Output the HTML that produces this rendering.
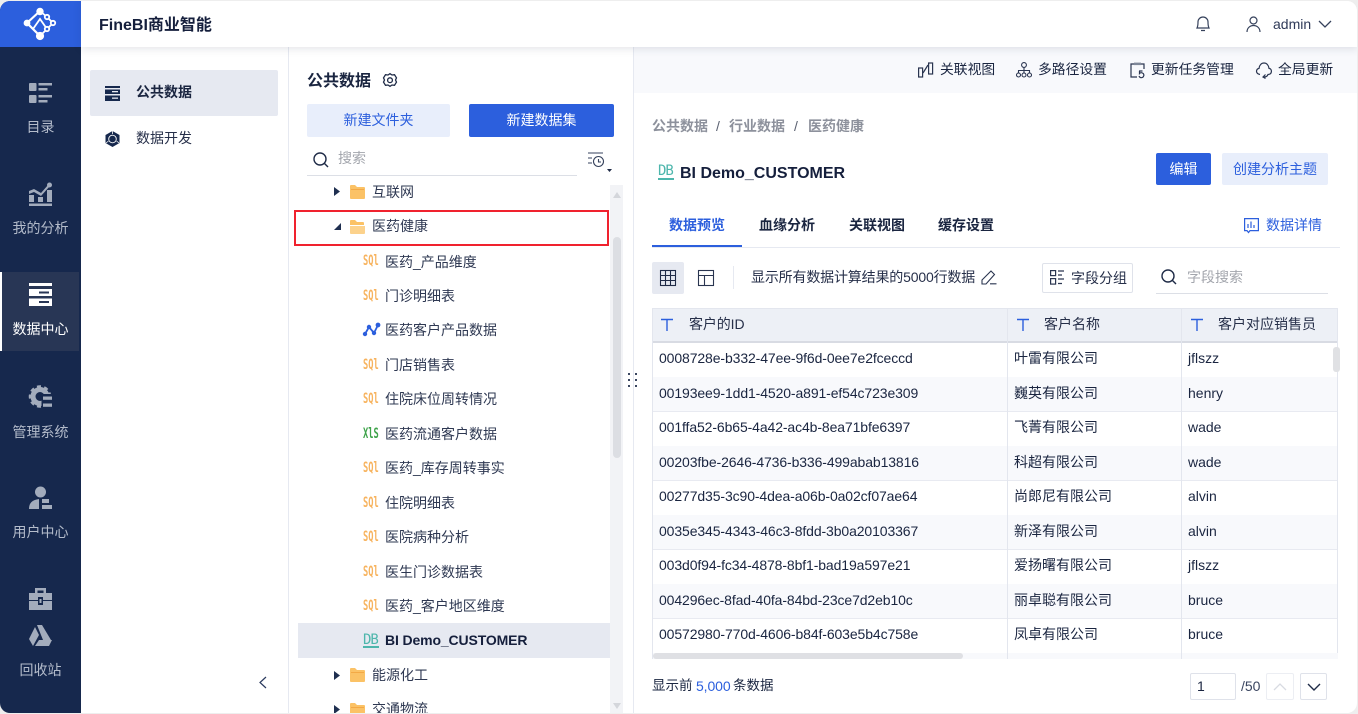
<!DOCTYPE html>
<html lang="zh"><head><meta charset="utf-8"><title>FineBI</title>
<style>
*{box-sizing:border-box}
html,body{margin:0;padding:0;width:1358px;height:714px;overflow:hidden;background:#eeeeee}
body{font-family:"Liberation Sans","Noto Sans CJK SC",sans-serif;font-size:14px;color:#1a2540}
#app{position:absolute;left:0;top:1px;width:1357px;height:712px;background:#fff;border-radius:10px;overflow:hidden}
.a{position:absolute}
.t{position:absolute;white-space:nowrap;line-height:20px;height:20px}
.id{letter-spacing:-.11px}
svg{position:absolute;overflow:visible}
.side{color:#b4bccb;width:81px;left:0;text-align:center}
.b{font-weight:700}
.sq,.xl{position:absolute;font:700 14px/14px "DejaVu Sans Mono",monospace;transform:scaleX(.62);transform-origin:0 0;white-space:nowrap;left:363px}
.sq{color:#f7b35e}
.xl{color:#3ea34a}
.db{position:absolute;font:400 14px/14px "DejaVu Sans Mono",monospace;color:#4db6ac;border-bottom:2px solid #4db6ac;height:15px;letter-spacing:-1px;width:16px;white-space:nowrap}
.bl{color:#2c5fdd}
.btn{position:absolute;text-align:center;border-radius:2px;line-height:32px}
.r{position:absolute;left:652px;width:686px;height:35px;border-bottom:1px solid #e8eaf1}
.r.z{background:#f8f9fc}
.v{position:absolute;width:1px;background:#e3e6ee;top:308px;height:351px}
.tb{font-size:13.8px}
</style></head><body>
<div id="app">
<div style="position:absolute;left:0;top:-1px;width:1358px;height:714px">

<!-- sidebar -->
<div class="a" style="left:0;top:0;width:81px;height:714px;background:#16284d"></div>
<div class="a" style="left:0;top:0;width:81px;height:47px;background:#2c5fdd"></div>
<svg style="left:24px;top:8px" width="33" height="32" viewBox="0 0 33 32" fill="none" stroke="#fff" stroke-width="1.800"><path d="M16 3L3 15l13 13" stroke-width="2.200"/><path d="M16 3l7 6 6 6-6 6-7 7M9 21l7-10 7 10"/><circle cx="16" cy="3.500" r="2.800" fill="#fff"/><circle cx="3" cy="15" r="2.500" fill="#fff"/><circle cx="16" cy="28" r="3.200" fill="#fff"/><circle cx="23" cy="9" r="2.200" fill="#2c5fdd"/><circle cx="29" cy="15" r="2.200" fill="#2c5fdd"/><circle cx="23" cy="21" r="2.200" fill="#2c5fdd"/></svg>
<div class="a" style="left:2px;top:272px;width:77px;height:79px;background:#283655"></div>
<div class="a" style="left:0;top:272px;width:2px;height:79px;background:#fff"></div>

<svg style="left:29px;top:82px" width="23" height="22" fill="#a3acbc"><rect width="7.500" height="8" y="1" rx="1"/><rect y="13" width="7.500" height="8" rx="1"/><rect x="9.500" y="1" width="13.500" height="2.500"/><rect x="9.500" y="6" width="9" height="2.500"/><rect x="9.500" y="13" width="13.500" height="2.500"/><rect x="9.500" y="18" width="9" height="2.500"/></svg>
<div class="t side" style="top:117px">目录</div>
<svg style="left:29px;top:182px" width="23" height="24" fill="#a3acbc"><path d="M0 9l5-2 7 4 7-8 1.500 1.500L12 14 5 10l-5 2z"/><circle cx="20.500" cy="3" r="2.500"/><rect y="13" width="5" height="7"/><rect x="9" y="15" width="5" height="5"/><rect x="18" y="8" width="5" height="12"/><rect y="21.500" width="23" height="2.500"/></svg>
<div class="t side" style="top:218px">我的分析</div>
<svg style="left:29px;top:283px" width="23" height="23" fill="#fff"><rect width="23" height="3"/><rect y="6" width="23" height="7"/><rect y="15.500" width="23" height="7.500"/><rect x="10" y="8.500" width="10" height="2" fill="#283655"/><rect x="10" y="18" width="10" height="2" fill="#283655"/></svg>
<div class="t side" style="top:319px;color:#fff">数据中心</div>
<svg style="left:29px;top:385px" width="23" height="23" fill="none"><circle cx="11" cy="11.500" r="7" stroke="#a3acbc" stroke-width="5"/><circle cx="11" cy="11.500" r="10" stroke="#a3acbc" stroke-width="2.500" stroke-dasharray="4 3.300"/><rect x="12.500" y="9" width="11" height="15" fill="#16284d"/><rect x="14" y="11.500" width="9" height="3.300" fill="#a3acbc"/><rect x="14" y="18.500" width="9" height="3.300" fill="#a3acbc"/></svg>
<div class="t side" style="top:422px">管理系统</div>
<svg style="left:29px;top:486px" width="23" height="24" fill="#a3acbc"><circle cx="11.500" cy="6" r="5.500"/><path d="M0 23c0-6 3-9 10-10v10z"/><rect x="13" y="13" width="7" height="4"/><rect x="13" y="19" width="10" height="4"/></svg>
<div class="t side" style="top:522px">用户中心</div>
<svg style="left:29px;top:588px" width="23" height="22" fill="#a3acbc"><path d="M6 0h11v5h-2.500V2.500h-6V5H6z"/><rect y="5" width="23" height="7"/><rect y="13" width="23" height="9"/><rect x="9" y="9" width="5" height="8" fill="#16284d"/><rect x="10.500" y="11" width="2" height="4" fill="#a3acbc"/></svg>
<svg style="left:29px;top:625px" width="23" height="22" fill="#a3acbc"><path d="M8 0h5l9 15H14z"/><path d="M6 2l4 8-6 11-4-7z"/><path d="M10 15h13l-3 6H6z"/></svg>
<div class="t side" style="top:660px">回收站</div>

<!-- topbar -->
<div class="a" style="left:81px;top:0;width:1277px;height:47px;background:#fff;box-shadow:0 2px 8px rgba(30,40,70,.12);z-index:3"></div>
<div class="t b" style="left:99px;top:16px;font-size:16px;z-index:4;color:#151f3c">FineBI商业智能</div>
<svg style="left:1195px;top:15px;z-index:4" width="16" height="17" fill="none" stroke="#36425c" stroke-width="1.200"><path d="M2 13c1-2 1-3 1-6a5 5 0 0 1 10 0c0 3 0 4 1 6zM6 15.500h4"/></svg>
<svg style="left:1246px;top:16px;z-index:4" width="15" height="16" fill="none" stroke="#36425c" stroke-width="1.200"><circle cx="7.500" cy="4.500" r="3.500"/><path d="M1 16c0-4 3-6.500 6.500-6.500S14 12 14 16"/></svg>
<div class="t" style="left:1273px;top:14px;color:#2f3a58;z-index:4">admin</div>
<svg style="left:1318px;top:20px;z-index:4" width="14" height="9" fill="none" stroke="#36425c" stroke-width="1.300"><path d="M1 1l6 6 6-6"/></svg>

<!-- left nav -->
<div class="a" style="left:288px;top:47px;width:1px;height:667px;background:#e6e9f1"></div>
<div class="a" style="left:90px;top:70px;width:188px;height:46px;background:#e6e9f1;border-radius:2px"></div>
<svg style="left:105px;top:86px" width="15" height="15" fill="#16284d"><rect width="15" height="2"/><rect y="3.500" width="15" height="4.500"/><rect y="9.500" width="15" height="5.500"/><rect x="7" y="5" width="6" height="1.300" fill="#e6e9f1"/><rect x="7" y="11.500" width="6" height="1.300" fill="#e6e9f1"/></svg>
<div class="t b" style="left:136px;top:82px">公共数据</div>
<svg style="left:105px;top:131px" width="15" height="16" fill="#16284d"><path d="M7.500 0l7 4v8l-7 4-7-4V4z"/><circle cx="7.500" cy="8" r="3.800" fill="none" stroke="#fff" stroke-width=".9"/><path d="M7.500 0v3M1 12l2.500-2M14 12l-2.500-2" stroke="#fff" stroke-width=".8"/></svg>
<div class="t" style="left:136px;top:128px;color:#262f49">数据开发</div>
<svg style="left:258px;top:676px" width="9" height="13" fill="none" stroke="#2a3a5e" stroke-width="1.200"><path d="M8 1L2 6.500 8 12"/></svg>

<!-- tree panel -->
<div class="a" style="left:633px;top:47px;width:1px;height:667px;background:#e6e9f1"></div>
<div class="t b" style="left:307px;top:72px;font-size:16px">公共数据</div>
<svg style="left:382px;top:73px" width="16" height="16" viewBox="0 0 16 16" fill="none" stroke="#1f2b47" stroke-width="1.300"><path d="M8 .7l2 1.300 2.500-.3 2 3.200-1 2.100 1 2.100-2 3.200-2.500-.3-2 1.300-2-1.300-2.500.3-2-3.200 1-2.100-1-2.100 2-3.200 2.500.3z"/><circle cx="8" cy="7.200" r="2.400"/></svg>
<div class="btn bl" style="left:307px;top:104px;width:143px;height:33px;background:#e8eefb">新建文件夹</div>
<div class="btn" style="left:469px;top:104px;width:145px;height:33px;background:#2c5fdd;color:#fff">新建数据集</div>
<svg style="left:313px;top:152px" width="16" height="16" fill="none" stroke="#1f2b47" stroke-width="1.400"><circle cx="7" cy="7" r="6"/><path d="M11.500 11.500L15 15"/></svg>
<div class="t" style="left:338px;top:148px;color:#a3a6ad">搜索</div>
<div class="a" style="left:307px;top:175px;width:270px;height:1px;background:#dcdfe6"></div>
<svg style="left:588px;top:152px" width="24" height="22" fill="none" stroke="#36425c" stroke-width="1.100"><path d="M0 1h15M0 6h4M0 11h4"/><circle cx="10.500" cy="9.500" r="5"/><path d="M10.500 7v3h2.500"/><path d="M19 17h5l-2.500 3z" fill="#1f2b47" stroke="none"/></svg>

<div class="a" style="left:610px;top:185px;width:13px;height:529px;background:#f2f3f6"></div>
<div class="a" style="left:613px;top:237px;width:8px;height:221px;background:#dcdee3;border-radius:4px"></div>
<svg style="left:613px;top:192px" width="8" height="6" fill="#d4d6db"><path d="M4 0l4 6H0z"></path></svg>
<svg style="left:613px;top:703px" width="8" height="6" fill="#d4d6db"><path d="M4 6l4-6H0z"></path></svg>

<svg style="left:334px;top:187px" width="7" height="9" fill="#1f2f50"><path d="M0 0l6 4.500L0 9z"/></svg>
<svg style="left:350px;top:185px" width="15" height="14"><path d="M0 1a1 1 0 0 1 1-1h4l2 2h7a1 1 0 0 1 1 1v10a1 1 0 0 1-1 1H1a1 1 0 0 1-1-1z" fill="#fbc266"/><rect x="1" y="4" width="13" height="1" fill="#f3a946"/></svg>
<div class="t" style="left:372px;top:182px;color:#2e3852">互联网</div>

<div class="a" style="left:294px;top:210px;width:315px;height:36px;border:2px solid #f0222e"></div>
<svg style="left:334px;top:223px" width="7" height="7" fill="#1f2f50"><path d="M7 0v7H0z"/></svg>
<svg style="left:350px;top:220px" width="15" height="14"><path d="M0 1a1 1 0 0 1 1-1h4l2 2h6a1 1 0 0 1 1 1v2H0z" fill="#fbc266"/><path d="M0 6h15v7a1 1 0 0 1-1 1H1a1 1 0 0 1-1-1z" fill="#fcd28c"/></svg>
<div class="t" style="left:372px;top:216px;color:#2e3852">医药健康</div>

<span class="sq" style="top:254px">SQl</span><div class="t" style="left:385px;top:252px;color:#2e3852">医药_产品维度</div>
<span class="sq" style="top:289px">SQl</span><div class="t" style="left:385px;top:286px;color:#2e3852">门诊明细表</div>
<svg style="left:363px;top:323px" width="17" height="13" fill="none" stroke="#2c5fdd" stroke-width="1.800"><path d="M2 11L6 4l5 6 4-8"/><circle cx="2" cy="11" r="1.300" fill="#2c5fdd"/><circle cx="6" cy="4" r="1.300" fill="#2c5fdd"/><circle cx="11" cy="10" r="1.300" fill="#2c5fdd"/><circle cx="15" cy="2" r="1.500" fill="#2c5fdd"/></svg>
<div class="t" style="left:385px;top:320px;color:#2e3852">医药客户产品数据</div>
<span class="sq" style="top:358px">SQl</span><div class="t" style="left:385px;top:355px;color:#2e3852">门店销售表</div>
<span class="sq" style="top:392px">SQl</span><div class="t" style="left:385px;top:389px;color:#2e3852">住院床位周转情况</div>
<span class="xl" style="top:427px">XlS</span><div class="t" style="left:385px;top:424px;color:#2e3852">医药流通客户数据</div>
<span class="sq" style="top:461px">SQl</span><div class="t" style="left:385px;top:458px;color:#2e3852">医药_库存周转事实</div>
<span class="sq" style="top:496px">SQl</span><div class="t" style="left:385px;top:493px;color:#2e3852">住院明细表</div>
<span class="sq" style="top:530px">SQl</span><div class="t" style="left:385px;top:527px;color:#2e3852">医院病种分析</div>
<span class="sq" style="top:565px">SQl</span><div class="t" style="left:385px;top:562px;color:#2e3852">医生门诊数据表</div>
<span class="sq" style="top:599px">SQl</span><div class="t" style="left:385px;top:596px;color:#2e3852">医药_客户地区维度</div>
<div class="a" style="left:298px;top:623px;width:312px;height:35px;background:#e6e9f1"></div>
<span class="db" style="left:363px;top:633px">DB</span><div class="t b" style="left:385px;top:630px;color:#151f3c;letter-spacing:-.13px">BI Demo_CUSTOMER</div>
<svg style="left:334px;top:671px" width="7" height="9" fill="#1f2f50"><path d="M0 0l6 4.500L0 9z"/></svg>
<svg style="left:350px;top:668px" width="15" height="14"><path d="M0 1a1 1 0 0 1 1-1h4l2 2h7a1 1 0 0 1 1 1v10a1 1 0 0 1-1 1H1a1 1 0 0 1-1-1z" fill="#fbc266"/><rect x="1" y="4" width="13" height="1" fill="#f3a946"/></svg>
<div class="t" style="left:372px;top:665px;color:#2e3852">能源化工</div>
<svg style="left:334px;top:705px" width="7" height="9" fill="#1f2f50"><path d="M0 0l6 4.500L0 9z"/></svg>
<svg style="left:350px;top:703px" width="15" height="14"><path d="M0 1a1 1 0 0 1 1-1h4l2 2h7a1 1 0 0 1 1 1v10a1 1 0 0 1-1 1H1a1 1 0 0 1-1-1z" fill="#fbc266"/><rect x="1" y="4" width="13" height="1" fill="#f3a946"/></svg>
<div class="t" style="left:372px;top:699px;color:#2e3852">交通物流</div>

<svg style="left:628px;top:373px" width="10" height="14" fill="#3a4660"><rect width="2" height="2"/><rect x="7" width="2" height="2"/><rect y="6" width="2" height="2"/><rect x="7" y="6" width="2" height="2"/><rect y="12" width="2" height="2"/><rect x="7" y="12" width="2" height="2"/></svg>

<!-- right toolbar -->
<div class="a" style="left:634px;top:47px;width:724px;height:46px;background:#f8f9fc"></div>
<svg style="left:918px;top:62px" width="16" height="16" fill="none" stroke="#2a3550" stroke-width="1.200"><rect x=".6" y="6" width="4" height="9"/><rect x="10.600" y="1" width="4" height="11"/><path d="M5 11l5-8"/></svg>
<div class="t tb" style="left:940px;top:59.500px">关联视图</div>
<svg style="left:1016px;top:62px" width="16" height="16" fill="none" stroke="#2a3550" stroke-width="1.100"><circle cx="8" cy="3" r="2.400"/><circle cx="2.500" cy="13" r="2"/><circle cx="8" cy="13" r="2"/><circle cx="13.500" cy="13" r="2"/><path d="M8 5.500V11M2.500 11V8.500h11V11"/></svg>
<div class="t tb" style="left:1038px;top:59.500px">多路径设置</div>
<svg style="left:1130px;top:62px" width="16" height="16" fill="none" stroke="#2a3550" stroke-width="1.200"><path d="M4 2H1v13h6M11 2h3v5"/><rect x="4" y="0.600" width="7" height="2.500" fill="#7f8899" stroke="none"/><path d="M9 9h3.500M9.500 9v2.500a2.500 2.500 0 1 1-.5 2.500"/></svg>
<div class="t tb" style="left:1151px;top:59.500px">更新任务管理</div>
<svg style="left:1256px;top:62px" width="16" height="16" fill="none" stroke="#2a3550" stroke-width="1.200"><path d="M4 12.500C1 12 0 10 .8 8c.5-1 1.200-1.500 2.200-1.600C3.500 3 5.500 1 8 1s4.500 2 5 5.400c1.500.2 2.500 1.500 2.400 3-.1 1.800-1.400 3-3.400 3.100-.5 1.500-2 2.500-4 2.500"/><path d="M9.500 12.500L7 15l2.500 1.500"/></svg>
<div class="t tb" style="left:1278px;top:59.500px">全局更新</div>

<!-- content header -->
<div class="t b" style="left:652px;top:116px;color:#8d919c">公共数据</div>
<div class="t" style="left:716px;top:116px;color:#5a6070">/</div>
<div class="t b" style="left:729px;top:116px;color:#8d919c">行业数据</div>
<div class="t" style="left:794px;top:116px;color:#5a6070">/</div>
<div class="t b" style="left:808px;top:116px;color:#8d919c">医药健康</div>
<span class="db" style="left:658px;top:164px;height:16px">DB</span>
<div class="t b" style="left:680px;top:162px;font-size:16px;color:#151f3c;line-height:21px;height:21px;padding-top:1px">BI Demo_CUSTOMER</div>
<div class="btn" style="left:1156px;top:153px;width:55px;height:32px;background:#2c5fdd;color:#fff">编辑</div>
<div class="btn bl" style="left:1222px;top:153px;width:106px;height:32px;background:#e8eefb">创建分析主题</div>

<!-- tabs -->
<div class="a" style="left:652px;top:247px;width:688px;height:1px;background:#e6e9f1"></div>
<div class="a" style="left:652px;top:245px;width:90px;height:2px;background:#2c5fdd"></div>
<div class="t b bl" style="left:669px;top:215px">数据预览</div>
<div class="t b" style="left:759px;top:215px">血缘分析</div>
<div class="t b" style="left:849px;top:215px">关联视图</div>
<div class="t b" style="left:938px;top:215px">缓存设置</div>
<svg style="left:1244px;top:218px" width="15" height="15" fill="none" stroke="#2c5fdd" stroke-width="1.200"><path d="M.6.6h13.800v12H6L4.500 14.500 3 12.600H.6z"/><path d="M4 6v4M7 3.500V10M10 7v3"/></svg>
<div class="t bl" style="left:1266px;top:215px">数据详情</div>

<!-- tools -->
<div class="a" style="left:652px;top:262px;width:32px;height:32px;background:#e6e9f1;border-radius:2px"></div>
<svg style="left:660px;top:270px" width="16" height="16" fill="none" stroke="#1f2b47" stroke-width="1.100"><rect x=".5" y=".5" width="15" height="15"/><path d="M5.500 0v16M10.500 0v16M0 5.500h16M0 10.500h16"/></svg>
<svg style="left:698px;top:270px" width="16" height="16" fill="none" stroke="#2a3550" stroke-width="1.100"><rect x=".5" y=".5" width="15" height="15"/><path d="M0 5.500h16M6.500 5.500V16"/></svg>
<div class="a" style="left:733px;top:266px;width:1px;height:23px;background:#e6e9f1"></div>
<div class="t" style="left:751px;top:267px;color:#262f49;letter-spacing:-.17px">显示所有数据计算结果的5000行数据</div>
<svg style="left:981px;top:269px" width="16" height="16" fill="none" stroke="#2a3550" stroke-width="1.100"><path d="M1 11L10 2l3.500 3.500-8.500 9.500H1zM9 14.800h6.500"/></svg>
<div class="a" style="left:1042px;top:263px;width:91px;height:30px;border:1px solid #dfe2ea;border-radius:2px"></div>
<svg style="left:1050px;top:270px" width="15" height="15" fill="none" stroke="#2a3550" stroke-width="1.200"><rect x=".6" y=".6" width="5" height="5"/><rect x=".6" y="8.600" width="5" height="5.500"/><path d="M8 1h6M8 5h4M8 9h6M8 13.500h4"/></svg>
<div class="t" style="left:1071px;top:268px;color:#262f49">字段分组</div>
<svg style="left:1161px;top:269px" width="16" height="16" fill="none" stroke="#1f2b47" stroke-width="1.400"><circle cx="7" cy="7" r="6"/><path d="M11.500 11.500L15 15"/></svg>
<div class="t" style="left:1187px;top:267px;color:#a3a6ad">字段搜索</div>
<div class="a" style="left:1156px;top:293px;width:172px;height:1px;background:#dcdfe6"></div>

<!-- table -->
<div class="a" style="left:652px;top:308px;width:686px;height:35px;background:#edf0f6;border-top:1px solid #e3e6ee;border-bottom:2px solid #d8dbe3"></div>
<div class="r" style="top:343px"></div>
<div class="r z" style="top:377px"></div>
<div class="r" style="top:412px"></div>
<div class="r z" style="top:446px"></div>
<div class="r" style="top:481px"></div>
<div class="r z" style="top:515px"></div>
<div class="r" style="top:550px"></div>
<div class="r z" style="top:584px"></div>
<div class="r" style="top:619px"></div>
<div class="v" style="left:652px"></div>
<div class="v" style="left:1007px"></div>
<div class="v" style="left:1181px"></div>
<div class="v" style="left:1337px"></div>

<svg style="left:660px;top:318px" width="14" height="14" fill="none" stroke="#2c5fdd" stroke-width="1.400"><path d="M1 1.500h12M7 1.500V13"/></svg>
<svg style="left:1016px;top:318px" width="14" height="14" fill="none" stroke="#2c5fdd" stroke-width="1.400"><path d="M1 1.500h12M7 1.500V13"/></svg>
<svg style="left:1190px;top:318px" width="14" height="14" fill="none" stroke="#2c5fdd" stroke-width="1.400"><path d="M1 1.500h12M7 1.500V13"/></svg>
<div class="t id" style="left:689px;top:314px;color:#262f49">客户的ID</div>
<div class="t" style="left:1044px;top:314px;color:#262f49">客户名称</div>
<div class="t" style="left:1218px;top:314px;color:#262f49">客户对应销售员</div>

<div class="t id" style="left:659px;top:348px">0008728e-b332-47ee-9f6d-0ee7e2fceccd</div><div class="t" style="left:1014px;top:348px">叶雷有限公司</div><div class="t" style="left:1188px;top:348px">jflszz</div>
<div class="t id" style="left:659px;top:383px">00193ee9-1dd1-4520-a891-ef54c723e309</div><div class="t" style="left:1014px;top:383px">巍英有限公司</div><div class="t" style="left:1188px;top:383px">henry</div>
<div class="t id" style="left:659px;top:417px">001ffa52-6b65-4a42-ac4b-8ea71bfe6397</div><div class="t" style="left:1014px;top:417px">飞菁有限公司</div><div class="t" style="left:1188px;top:417px">wade</div>
<div class="t id" style="left:659px;top:452px">00203fbe-2646-4736-b336-499abab13816</div><div class="t" style="left:1014px;top:452px">科超有限公司</div><div class="t" style="left:1188px;top:452px">wade</div>
<div class="t id" style="left:659px;top:486px">00277d35-3c90-4dea-a06b-0a02cf07ae64</div><div class="t" style="left:1014px;top:486px">尚郎尼有限公司</div><div class="t" style="left:1188px;top:486px">alvin</div>
<div class="t id" style="left:659px;top:521px">0035e345-4343-46c3-8fdd-3b0a20103367</div><div class="t" style="left:1014px;top:521px">新泽有限公司</div><div class="t" style="left:1188px;top:521px">alvin</div>
<div class="t id" style="left:659px;top:555px">003d0f94-fc34-4878-8bf1-bad19a597e21</div><div class="t" style="left:1014px;top:555px">爱扬曙有限公司</div><div class="t" style="left:1188px;top:555px">jflszz</div>
<div class="t id" style="left:659px;top:590px">004296ec-8fad-40fa-84bd-23ce7d2eb10c</div><div class="t" style="left:1014px;top:590px">丽卓聪有限公司</div><div class="t" style="left:1188px;top:590px">bruce</div>
<div class="t id" style="left:659px;top:624px">00572980-770d-4606-b84f-603e5b4c758e</div><div class="t" style="left:1014px;top:624px">凤卓有限公司</div><div class="t" style="left:1188px;top:624px">bruce</div>

<div class="a" style="left:652px;top:653px;width:686px;height:6px;background:#f8f9fc"></div>
<div class="v" style="left:652px;top:653px;height:6px"></div><div class="v" style="left:1007px;top:653px;height:6px"></div><div class="v" style="left:1181px;top:653px;height:6px"></div>
<div class="a" style="left:653px;top:653px;width:310px;height:6px;background:#dfe0e4;border-radius:3px"></div>
<div class="a" style="left:1333px;top:347px;width:7px;height:25px;background:#e0e1e4;border-radius:3px"></div>

<!-- footer -->
<div class="t" style="left:652px;top:676px;font-size:13.500px">显示前</div>
<div class="t bl" style="left:696px;top:676px;letter-spacing:-.1px">5,000</div>
<div class="t" style="left:733px;top:676px;font-size:13.500px">条数据</div>
<div class="a" style="left:1190px;top:673px;width:46px;height:27px;border:1px solid #dfe2ea;border-radius:2px;line-height:25px;padding-left:6px">1</div>
<div class="t" style="left:1241px;top:676px;color:#3a4560">/50</div>
<div class="a" style="left:1266px;top:673px;width:28px;height:27px;border:1px solid #eceef3;border-radius:2px"></div>
<svg style="left:1273px;top:683px" width="14" height="8" fill="none" stroke="#d8dbe2" stroke-width="1.300"><path d="M1 7l6-6 6 6"/></svg>
<div class="a" style="left:1300px;top:673px;width:27px;height:27px;border:1px solid #dfe2ea;border-radius:2px"></div>
<svg style="left:1307px;top:683px" width="14" height="8" fill="none" stroke="#1f2b47" stroke-width="1.400"><path d="M1 1l6 6 6-6"/></svg>
</div>
</div>
</body></html>
